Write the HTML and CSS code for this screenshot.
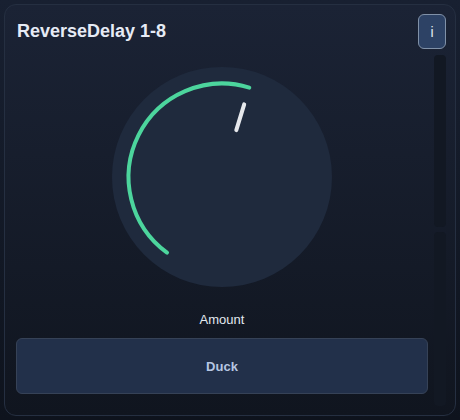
FILE: index.html
```html
<!DOCTYPE html>
<html>
<head>
<meta charset="utf-8">
<link rel="stylesheet" href="styles.css">
</head>
<body>
<div class="panel">
  <div class="header">
    <div class="title">ReverseDelay 1-8</div>
    <button class="info">i</button>
  </div>
  <div class="content">
    <div class="main">
      <div class="knob">
        <svg width="220" height="220" viewBox="0 0 220 220">
          <circle cx="110" cy="110" r="110" fill="#1f2a3d"/>
          <path d="M55 185.6 A93.5 93.5 0 0 1 137.3 20.6" fill="none" stroke="#4cd59d" stroke-width="4" stroke-linecap="round"/>
          <line x1="124.3" y1="63.1" x2="132.2" y2="37.3" stroke="#e6e8ec" stroke-width="4" stroke-linecap="round"/>
        </svg>
      </div>
      <div class="label">Amount</div>
      <button class="duck">Duck</button>
    </div>
    <div class="meter">
      <div class="seg seg-top"></div>
      <div class="seg seg-bottom"></div>
    </div>
  </div>
</div>
</body>
</html>
```
FILE: styles.css
```css
html, body {
  margin: 0;
  padding: 0;
}
body {
  width: 460px;
  height: 420px;
  background: linear-gradient(#182031, #0e131d);
  font-family: "Liberation Sans", Arial, sans-serif;
  padding: 4px;
  box-sizing: border-box;
}
.panel {
  box-sizing: border-box;
  width: 452px;
  height: 412px;
  border: 1px solid #252f41;
  border-radius: 12px;
  background: linear-gradient(#1b2335, #10151f);
  padding: 9px 9px 9px 11px;
  display: flex;
  flex-direction: column;
}
.header {
  display: flex;
  align-items: center;
  justify-content: space-between;
  height: 35px;
}
.title {
  color: #e6ebf5;
  font-size: 18px;
  font-weight: bold;
  padding-left: 1px;
}
.info {
  width: 28px;
  height: 35px;
  box-sizing: border-box;
  border: 1px solid #8091a8;
  border-radius: 6px;
  background: #2d4265;
  color: #e4eaf2;
  font-family: "Liberation Sans", Arial, sans-serif;
  font-size: 14px;
  padding: 0;
}
.content {
  display: flex;
  gap: 6px;
  margin-top: 6px;
  flex: 1;
}
.main {
  width: 412px;
  display: flex;
  flex-direction: column;
  align-items: center;
}
.knob {
  margin-top: 12px;
  height: 220px;
}
.knob svg {
  display: block;
}
.label {
  margin-top: 25px;
  color: #e2e8f0;
  font-size: 13px;
  line-height: 16px;
}
.duck {
  margin-top: 10px;
  width: 412px;
  height: 56px;
  box-sizing: border-box;
  border: 1px solid #364257;
  border-radius: 6px;
  background: #22304a;
  color: #b6c6e2;
  font-family: "Liberation Sans", Arial, sans-serif;
  font-size: 13px;
  font-weight: bold;
}
.meter {
  width: 12px;
  display: flex;
  flex-direction: column;
  gap: 5px;
}
.seg {
  background: #121823;
  border-radius: 4px;
}
.seg-top {
  height: 172px;
}
.seg-bottom {
  flex: 1;
}
```
